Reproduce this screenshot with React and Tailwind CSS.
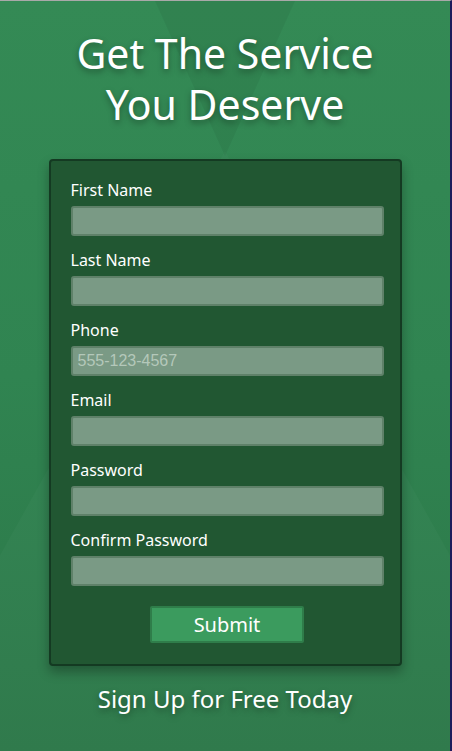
import React from "react";

const fields = [
  { label: "First Name", type: "text" },
  { label: "Last Name", type: "text" },
  { label: "Phone", type: "tel", placeholder: "555-123-4567" },
  { label: "Email", type: "email" },
  { label: "Password", type: "password" },
  { label: "Confirm Password", type: "password" },
];

function Backdrop() {
  // faint faceted shapes behind the page
  return (
    <svg
      className="pointer-events-none absolute inset-0 h-full w-full"
      viewBox="0 0 450 750"
      preserveAspectRatio="none">
      <polygon points="155,0 295,0 225,155" fill="#000" opacity="0.05" />
      <polygon points="225,150 -120,770 570,770" fill="#fff" opacity="0.025" />
    </svg>
  );
}

export default function App() {
  return (
    <div
      className="relative h-[751px] w-[452px] overflow-hidden border-t border-r-2 border-t-[#a9a9a9] border-r-[#1d1b5c] bg-gradient-to-b from-[#348a55] via-[#308451] to-[#2c7748]"
      style={{ fontFamily: '"Noto Sans", "Open Sans", sans-serif' }}>
      <Backdrop />

      <div className="relative flex flex-col items-center">
        <h1 className="mt-[27px] text-center text-[41px] leading-[51px] font-normal text-white [text-shadow:0_3px_6px_rgba(0,0,0,0.35)]">
          <span className="block">Get The Service</span>
          <span className="block">You Deserve</span>
        </h1>

        <form className="mt-[29px] w-[353px] rounded-[4px] border-2 border-[#143a22] bg-[#215732] pt-[19px] pr-[16px] pb-[21px] pl-5 shadow-[0_6px_12px_rgba(0,0,0,0.3)]">
          {fields.map((f) => (
            <div key={f.label} className="mb-[14px]">
              <label className="block text-[16px] leading-5 text-white">
                {f.label}
              </label>
              <input
                type={f.type}
                placeholder={f.placeholder}
                className="mt-[6px] block h-[30px] w-full rounded-[3px] border-2 border-[#5f8169] bg-[#7a9a85] px-[5px] text-[16px] text-white outline-none placeholder:text-[#b4c8ba]"
                style={{ fontFamily: '"Liberation Sans", Arial, sans-serif' }}
              />
            </div>
          ))}

          <div className="flex justify-center pt-[6px]">
            <button
              type="button"
              className="h-[37px] w-[154px] rounded-[2px] border-2 border-[#2f7d4a] bg-[#3b9b5e] text-[20px] leading-none text-white">
              Submit
            </button>
          </div>
        </form>

        <p className="mt-[17px] text-center text-[24px] leading-8 text-white [text-shadow:0_3px_6px_rgba(0,0,0,0.35)]">
          Sign Up for Free Today
        </p>
      </div>
    </div>
  );
}
